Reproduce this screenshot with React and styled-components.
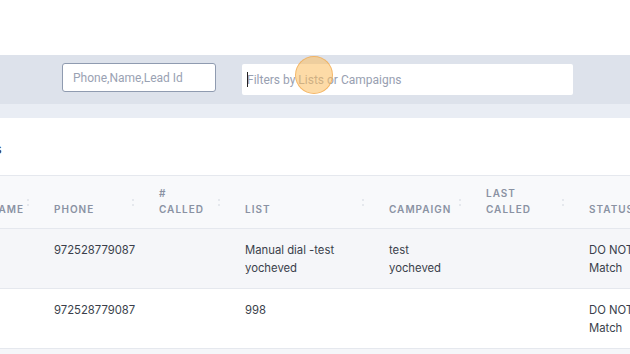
import React from "react";
import styled, { createGlobalStyle } from "styled-components";

const GlobalStyle = createGlobalStyle`
  html, body {
    margin: 0;
    padding: 0;
    background: #ffffff;
    overflow: hidden;
  }
  * { box-sizing: border-box; }
`;

const columns = [
  { key: "name", label: ["NAME"], width: 64 },
  { key: "phone", label: ["PHONE"], width: 105 },
  { key: "called", label: ["#", "CALLED"], width: 86 },
  { key: "list", label: ["LIST"], width: 144 },
  { key: "campaign", label: ["CAMPAIGN"], width: 97 },
  { key: "last", label: ["LAST", "CALLED"], width: 103 },
  { key: "status", label: ["STATUS"], width: 120 },
];

const rows = [
  { phone: "972528779087", called: "", list: ["Manual dial -test", "yocheved"], campaign: ["test", "yocheved"], last: "", status: ["DO NOT", "Match"] },
  { phone: "972528779087", called: "", list: ["998"], campaign: [], last: "", status: ["DO NOT", "Match"] },
];

const gridTemplate = columns.map((c) => `${c.width}px`).join(" ");

export default function App() {
  return (
    <Page>
      <GlobalStyle />
      <TopSpace />
      <FilterBar>
        <SearchInput placeholder="Phone,Name,Lead Id" />
        <FilterField>
          <FilterInput placeholder="Filters by Lists or Campaigns" />
          <Caret />
          <ClickMark />
        </FilterField>
      </FilterBar>
      <Strip />
      <TitleArea>
        <Title>Leads</Title>
      </TitleArea>
      <Table>
        <HeadRow>
          {columns.map((c) => (
            <HeadCell key={c.key}>
              <HeadLabel>
                {c.label.map((l) => (
                  <span key={l}>{l}</span>
                ))}
              </HeadLabel>
              <SortDots>
                <i />
                <i />
              </SortDots>
            </HeadCell>
          ))}
        </HeadRow>
        {rows.map((r, i) => (
          <BodyRow key={i} $striped={i % 2 === 0}>
            <Cell />
            <Cell>{r.phone}</Cell>
            <Cell>{r.called}</Cell>
            <Cell>{r.list.map((t) => <div key={t}>{t}</div>)}</Cell>
            <Cell>{r.campaign.map((t) => <div key={t}>{t}</div>)}</Cell>
            <Cell>{r.last}</Cell>
            <Cell>{r.status.map((t) => <div key={t}>{t}</div>)}</Cell>
          </BodyRow>
        ))}
        <BodyRow $striped />
      </Table>
    </Page>
  );
}

const Page = styled.div`
  width: 630px;
  height: 354px;
  overflow: hidden;
  font-family: Inter, "Noto Sans", sans-serif;
`;

const TopSpace = styled.div`
  height: 55px;
  background: #ffffff;
`;

const FilterBar = styled.div`
  height: 49px;
  background: #dde2eb;
  display: flex;
  align-items: flex-start;
  padding: 8px 0 0 62px;
  gap: 26px;
`;

const SearchInput = styled.input`
  width: 154px;
  height: 29px;
  border: 1px solid #8f9bb0;
  border-radius: 3px;
  background: #ffffff;
  padding: 0 10px;
  font-family: Roboto, "Liberation Sans", sans-serif;
  font-size: 12px;
  outline: none;
  &::placeholder { color: #9aa2b3; }
`;

const FilterField = styled.div`
  position: relative;
  width: 331px;
  height: 31px;
  margin-top: 1px;
`;

const FilterInput = styled.input`
  width: 100%;
  height: 100%;
  border: none;
  border-radius: 2px;
  background: #ffffff;
  padding: 0 5px;
  font-family: Roboto, "Liberation Sans", sans-serif;
  font-size: 12px;
  outline: none;
  &::placeholder { color: #98a0b1; }
`;

const Caret = styled.span`
  position: absolute;
  left: 5px;
  top: 8px;
  width: 1px;
  height: 15px;
  background: #222;
`;

const ClickMark = styled.span`
  position: absolute;
  left: 53px;
  top: -8px;
  width: 38px;
  height: 38px;
  border-radius: 50%;
  background: rgba(252, 190, 95, 0.55);
  border: 1.5px solid rgba(240, 170, 80, 0.75);
`;

const Strip = styled.div`
  height: 14px;
  background: #e9edf4;
`;

const TitleArea = styled.div`
  height: 57px;
  display: flex;
  align-items: center;
  overflow: hidden;
`;

const Title = styled.div`
  margin-left: -39px;
  font-size: 14px;
  font-weight: 600;
  color: #3b4150;
  margin-top: 3px;
`;

const Table = styled.div`
  margin-left: -24px;
  border-top: 1px solid #e5e8ee;
`;

const HeadRow = styled.div`
  display: grid;
  grid-template-columns: ${gridTemplate};
  height: 53px;
  background: #f8f9fb;
  border-bottom: 1px solid #e5e8ee;
`;

const HeadCell = styled.div`
  position: relative;
  display: flex;
  align-items: flex-end;
  padding: 0 14px 11px 14px;
`;

const HeadLabel = styled.div`
  display: flex;
  flex-direction: column;
  font-size: 10px;
  font-weight: 600;
  letter-spacing: 0.1em;
  line-height: 16px;
  color: #8a92a3;
`;

const SortDots = styled.div`
  position: absolute;
  right: 11px;
  top: 23px;
  display: flex;
  flex-direction: column;
  gap: 3px;
  i {
    display: block;
    width: 2px;
    height: 2px;
    border-radius: 1px;
    background: #dfe2e8;
  }
`;

const BodyRow = styled.div`
  display: grid;
  grid-template-columns: ${gridTemplate};
  height: 60px;
  background: ${(p) => (p.$striped ? "#f5f6f9" : "#ffffff")};
  border-bottom: 1px solid #e5e8ee;
`;

const Cell = styled.div`
  padding: 12px 14px 0 14px;
  font-size: 11.3px;
  line-height: 18px;
  color: #3a3f4b;
  white-space: nowrap;
`;
